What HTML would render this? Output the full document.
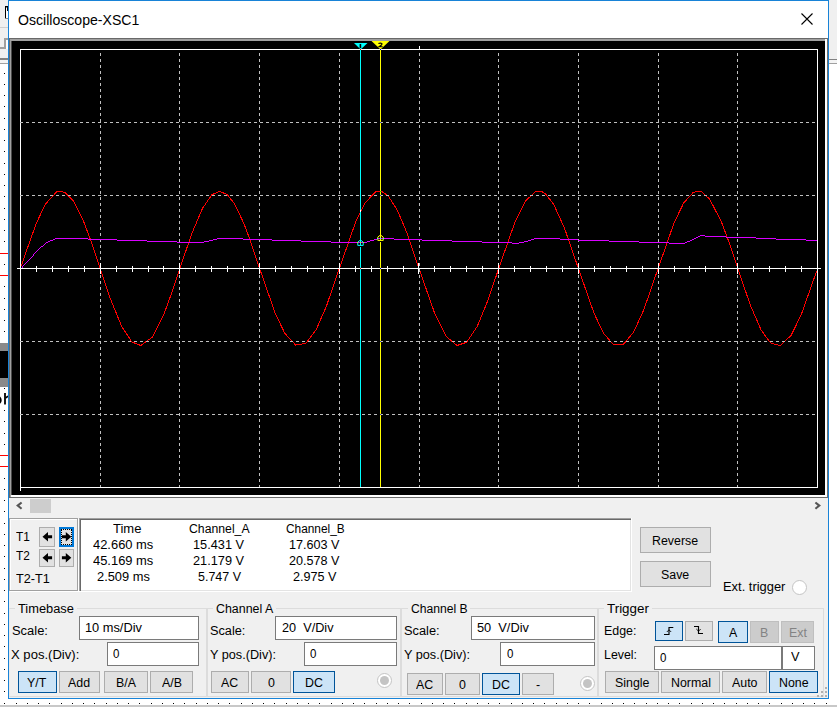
<!DOCTYPE html>
<html><head><meta charset="utf-8"><title>Oscilloscope-XSC1</title>
<style>
html,body{margin:0;padding:0;}
body{width:837px;height:707px;position:relative;overflow:hidden;background:#fff;font-family:"Liberation Sans",sans-serif;}
.t{position:absolute;white-space:pre;transform-origin:0 0;}
.b{position:absolute;box-sizing:border-box;background:#e1e1e1;border:1px solid #adadad;}
.ba{position:absolute;box-sizing:border-box;background:#cce4f7;border:1px solid #005499;}
.bd{position:absolute;box-sizing:border-box;background:#cccccc;border:1px solid #bfbfbf;}
.in{position:absolute;box-sizing:border-box;background:#fff;border:1px solid #7a7a7a;}
.g{position:absolute;box-sizing:border-box;border:1px solid #dcdcdc;}
</style></head><body>
<div style="position:absolute;left:0px;top:0px;width:8px;height:59px;background:#f0f0f0;"></div>
<div style="position:absolute;left:0px;top:27px;width:8px;height:1px;background:#cfcfcf;"></div>
<div style="position:absolute;left:5px;top:6px;width:3px;height:13px;background:#fff;"></div>
<div style="position:absolute;left:5px;top:6px;width:3px;height:1px;background:#000;"></div>
<div style="position:absolute;left:5px;top:7px;width:3px;height:0.5px;background:#888;"></div>
<div style="position:absolute;left:5px;top:6px;width:1px;height:13px;background:#000;"></div>
<div style="position:absolute;left:5px;top:18px;width:3px;height:1px;background:#000;"></div>
<div style="position:absolute;left:5px;top:17.5px;width:3px;height:0.5px;background:#888;"></div>
<div style="position:absolute;left:7px;top:7px;width:1px;height:4px;background:#111;"></div>
<div style="position:absolute;left:4px;top:38px;width:4px;height:2px;background:#a0a0a0;"></div>
<div style="position:absolute;left:4px;top:38px;width:2px;height:11px;background:#a0a0a0;"></div>
<div style="position:absolute;left:0px;top:47px;width:6px;height:2px;background:#a0a0a0;"></div>
<div style="position:absolute;left:6px;top:40px;width:2px;height:9px;background:#fff;"></div>
<div style="position:absolute;left:0px;top:58px;width:8px;height:2px;background:#828282;"></div>
<div style="position:absolute;left:0px;top:60px;width:8px;height:3px;background:#f4f4f4;"></div>
<div style="position:absolute;left:0px;top:63px;width:8px;height:1px;background:#a0a0a0;"></div>
<div style="position:absolute;left:829px;top:0px;width:8px;height:59px;background:#f0f0f0;"></div>
<div style="position:absolute;left:829px;top:59px;width:8px;height:1px;background:#828282;"></div>
<div style="position:absolute;left:829px;top:60px;width:8px;height:3px;background:#f4f4f4;"></div>
<div style="position:absolute;left:829px;top:63px;width:8px;height:1px;background:#a0a0a0;"></div>
<div style="position:absolute;left:0px;top:705px;width:837px;height:2px;background:#c8c8c8;"></div>
<div style="position:absolute;left:0px;top:343px;width:8px;height:8px;background:#8a8a8a;"></div>
<div style="position:absolute;left:0px;top:351px;width:8px;height:27px;background:#000;"></div>
<div style="position:absolute;left:0px;top:378px;width:8px;height:9px;background:#8a8a8a;"></div>
<div style="position:absolute;left:0px;top:253px;width:8px;height:1px;background:#ff0000;"></div>
<div style="position:absolute;left:0px;top:275px;width:8px;height:1px;background:#ff0000;"></div>
<div style="position:absolute;left:0px;top:455px;width:8px;height:1px;background:#ff0000;"></div>
<div style="position:absolute;left:0px;top:466px;width:8px;height:1px;background:#ff0000;"></div>
<svg style="position:absolute;left:0;top:388px" width="8" height="20"><rect x="4.1" y="5" width="1.8" height="11.5" fill="#000"/><path d="M5.9 10.2 Q6.8 8.6 8.2 8.4" stroke="#000" stroke-width="1.6" fill="none"/><ellipse cx="-2.6" cy="12.2" rx="3.4" ry="3.6" stroke="#000" stroke-width="1.8" fill="none"/></svg>
<svg style="position:absolute;left:0;top:0" width="837" height="707" shape-rendering="crispEdges"><rect x="4" y="73" width="1" height="1" fill="#000"/><rect x="4" y="84" width="1" height="1" fill="#000"/><rect x="4" y="95" width="1" height="1" fill="#000"/><rect x="4" y="106" width="1" height="1" fill="#000"/><rect x="4" y="118" width="1" height="1" fill="#000"/><rect x="4" y="129" width="1" height="1" fill="#000"/><rect x="4" y="140" width="1" height="1" fill="#000"/><rect x="4" y="151" width="1" height="1" fill="#000"/><rect x="4" y="163" width="1" height="1" fill="#000"/><rect x="4" y="174" width="1" height="1" fill="#000"/><rect x="4" y="185" width="1" height="1" fill="#000"/><rect x="4" y="196" width="1" height="1" fill="#000"/><rect x="4" y="208" width="1" height="1" fill="#000"/><rect x="4" y="219" width="1" height="1" fill="#000"/><rect x="4" y="230" width="1" height="1" fill="#000"/><rect x="4" y="241" width="1" height="1" fill="#000"/><rect x="4" y="264" width="1" height="1" fill="#000"/><rect x="4" y="286" width="1" height="1" fill="#000"/><rect x="4" y="298" width="1" height="1" fill="#000"/><rect x="4" y="309" width="1" height="1" fill="#000"/><rect x="4" y="320" width="1" height="1" fill="#000"/><rect x="4" y="331" width="1" height="1" fill="#000"/><rect x="4" y="388" width="1" height="1" fill="#000"/><rect x="4" y="410" width="1" height="1" fill="#000"/><rect x="4" y="421" width="1" height="1" fill="#000"/><rect x="4" y="433" width="1" height="1" fill="#000"/><rect x="4" y="444" width="1" height="1" fill="#000"/><rect x="4" y="478" width="1" height="1" fill="#000"/><rect x="4" y="489" width="1" height="1" fill="#000"/><rect x="4" y="500" width="1" height="1" fill="#000"/><rect x="4" y="511" width="1" height="1" fill="#000"/><rect x="4" y="523" width="1" height="1" fill="#000"/><rect x="4" y="534" width="1" height="1" fill="#000"/><rect x="4" y="545" width="1" height="1" fill="#000"/><rect x="4" y="556" width="1" height="1" fill="#000"/><rect x="4" y="568" width="1" height="1" fill="#000"/><rect x="4" y="579" width="1" height="1" fill="#000"/><rect x="4" y="590" width="1" height="1" fill="#000"/><rect x="4" y="601" width="1" height="1" fill="#000"/><rect x="4" y="613" width="1" height="1" fill="#000"/><rect x="4" y="624" width="1" height="1" fill="#000"/><rect x="4" y="635" width="1" height="1" fill="#000"/><rect x="4" y="646" width="1" height="1" fill="#000"/><rect x="4" y="658" width="1" height="1" fill="#000"/><rect x="4" y="669" width="1" height="1" fill="#000"/><rect x="4" y="680" width="1" height="1" fill="#000"/><rect x="4" y="691" width="1" height="1" fill="#000"/><rect x="4" y="703" width="1" height="1" fill="#000"/><rect x="16" y="703" width="1" height="1" fill="#000"/><rect x="27" y="703" width="1" height="1" fill="#000"/><rect x="38" y="703" width="1" height="1" fill="#000"/><rect x="49" y="703" width="1" height="1" fill="#000"/><rect x="61" y="703" width="1" height="1" fill="#000"/><rect x="72" y="703" width="1" height="1" fill="#000"/><rect x="83" y="703" width="1" height="1" fill="#000"/><rect x="94" y="703" width="1" height="1" fill="#000"/><rect x="106" y="703" width="1" height="1" fill="#000"/><rect x="117" y="703" width="1" height="1" fill="#000"/><rect x="128" y="703" width="1" height="1" fill="#000"/><rect x="139" y="703" width="1" height="1" fill="#000"/><rect x="151" y="703" width="1" height="1" fill="#000"/><rect x="162" y="703" width="1" height="1" fill="#000"/><rect x="173" y="703" width="1" height="1" fill="#000"/><rect x="184" y="703" width="1" height="1" fill="#000"/><rect x="196" y="703" width="1" height="1" fill="#000"/><rect x="207" y="703" width="1" height="1" fill="#000"/><rect x="218" y="703" width="1" height="1" fill="#000"/><rect x="229" y="703" width="1" height="1" fill="#000"/><rect x="241" y="703" width="1" height="1" fill="#000"/><rect x="252" y="703" width="1" height="1" fill="#000"/><rect x="263" y="703" width="1" height="1" fill="#000"/><rect x="274" y="703" width="1" height="1" fill="#000"/><rect x="286" y="703" width="1" height="1" fill="#000"/><rect x="297" y="703" width="1" height="1" fill="#000"/><rect x="308" y="703" width="1" height="1" fill="#000"/><rect x="319" y="703" width="1" height="1" fill="#000"/><rect x="331" y="703" width="1" height="1" fill="#000"/><rect x="342" y="703" width="1" height="1" fill="#000"/><rect x="353" y="703" width="1" height="1" fill="#000"/><rect x="364" y="703" width="1" height="1" fill="#000"/><rect x="376" y="703" width="1" height="1" fill="#000"/><rect x="387" y="703" width="1" height="1" fill="#000"/><rect x="398" y="703" width="1" height="1" fill="#000"/><rect x="409" y="703" width="1" height="1" fill="#000"/><rect x="421" y="703" width="1" height="1" fill="#000"/><rect x="432" y="703" width="1" height="1" fill="#000"/><rect x="443" y="703" width="1" height="1" fill="#000"/><rect x="454" y="703" width="1" height="1" fill="#000"/><rect x="466" y="703" width="1" height="1" fill="#000"/><rect x="477" y="703" width="1" height="1" fill="#000"/><rect x="488" y="703" width="1" height="1" fill="#000"/><rect x="499" y="703" width="1" height="1" fill="#000"/><rect x="511" y="703" width="1" height="1" fill="#000"/><rect x="522" y="703" width="1" height="1" fill="#000"/><rect x="533" y="703" width="1" height="1" fill="#000"/><rect x="544" y="703" width="1" height="1" fill="#000"/><rect x="556" y="703" width="1" height="1" fill="#000"/><rect x="567" y="703" width="1" height="1" fill="#000"/><rect x="578" y="703" width="1" height="1" fill="#000"/><rect x="589" y="703" width="1" height="1" fill="#000"/><rect x="601" y="703" width="1" height="1" fill="#000"/><rect x="612" y="703" width="1" height="1" fill="#000"/><rect x="623" y="703" width="1" height="1" fill="#000"/><rect x="634" y="703" width="1" height="1" fill="#000"/><rect x="646" y="703" width="1" height="1" fill="#000"/><rect x="657" y="703" width="1" height="1" fill="#000"/><rect x="668" y="703" width="1" height="1" fill="#000"/><rect x="679" y="703" width="1" height="1" fill="#000"/><rect x="691" y="703" width="1" height="1" fill="#000"/><rect x="702" y="703" width="1" height="1" fill="#000"/><rect x="713" y="703" width="1" height="1" fill="#000"/><rect x="724" y="703" width="1" height="1" fill="#000"/><rect x="736" y="703" width="1" height="1" fill="#000"/><rect x="747" y="703" width="1" height="1" fill="#000"/><rect x="758" y="703" width="1" height="1" fill="#000"/><rect x="769" y="703" width="1" height="1" fill="#000"/><rect x="781" y="703" width="1" height="1" fill="#000"/><rect x="792" y="703" width="1" height="1" fill="#000"/><rect x="803" y="703" width="1" height="1" fill="#000"/><rect x="814" y="703" width="1" height="1" fill="#000"/><rect x="826" y="703" width="1" height="1" fill="#000"/></svg>
<div style="position:absolute;left:8px;top:0px;width:821px;height:699px;background:#1883d7;"></div>
<div style="position:absolute;left:9px;top:1px;width:819px;height:697px;background:#f0f0f0;"></div>
<div style="position:absolute;left:9px;top:1px;width:819px;height:37px;background:#fff;"></div>
<div class="t" style="left:18.30px;top:11px;font-size:15px;line-height:17px;color:#000;transform:scaleX(0.9388);">Oscilloscope-XSC1</div>
<svg style="position:absolute;left:795px;top:8px" width="24" height="24"><path d="M6.5 5.5 L17.5 16.5 M17.5 5.5 L6.5 16.5" stroke="#000" stroke-width="1.1" fill="none"/></svg>
<div style="position:absolute;left:9px;top:38px;width:819px;height:460px;background:#fff;"></div>
<div style="position:absolute;left:9px;top:38px;width:818px;height:459px;background:#a0a0a0;"></div>
<div style="position:absolute;left:9px;top:38px;width:818px;height:1px;background:#696969;"></div>
<div style="position:absolute;left:9px;top:38px;width:1px;height:459px;background:#696969;"></div>
<div style="position:absolute;left:11px;top:41px;width:814px;height:454px;background:#000;"></div>
<div style="position:absolute;left:9px;top:497px;width:819px;height:1px;background:#696969;"></div>
<div style="position:absolute;left:11px;top:41px;width:1px;height:454px;background:#4a4a4a;"></div>
<div style="position:absolute;left:825px;top:39px;width:2px;height:458px;background:#fff;"></div>
<div style="position:absolute;left:11px;top:495px;width:816px;height:2px;background:#fff;"></div>
<div style="position:absolute;left:827px;top:38px;width:1px;height:460px;background:#707070;"></div>
<svg style="position:absolute;left:0;top:0" width="837" height="707" shape-rendering="crispEdges"><polyline points="21.2,266.4 24.5,256.3 36.5,222.8 45.5,204.0 56.5,192.0 60.7,191.5 65.2,192.5 73.5,201.2 83.6,221.4 91.3,241.9 100.2,268.5 110.3,298.5 121.7,326.5 131.9,342.0 140.8,345.5 152.3,337.1 163.7,314.7 172.0,292.2 179.9,268.5 191.5,234.3 202.4,208.5 211.9,194.7 219.6,191.5 227.2,194.4 234.8,204.3 243.7,223.1 248.8,236.5 259.6,268.5 275.4,313.7 284.9,333.5 295.7,345.1 305.9,343.4 316.1,329.8 326.3,306.5 339.3,268.5 356.0,221.1 364.9,203.0 375.7,191.8 382.1,191.6 388.5,196.3 397.4,210.3 406.3,231.3 419.0,268.5 434.7,313.4 446.2,336.5 457.0,345.5 466.6,342.3 477.4,326.1 488.0,300.2 498.7,268.5 514.7,222.8 525.5,201.1 535.1,191.8 542.1,191.8 545.9,194.3 553.6,204.3 564.4,227.9 578.4,268.5 594.1,313.4 603.6,333.4 613.2,344.4 623.4,344.3 633.6,332.2 643.7,310.1 658.1,268.5 674.1,222.8 683.6,203.1 693.2,192.4 697.6,191.5 701.5,191.8 709.7,199.2 721.2,221.4 728.8,241.6 737.8,268.5 750.3,305.1 761.1,330.0 770.6,343.0 780.2,345.5 791.0,335.5 801.2,314.9 816.6,271.2" stroke="#ff0000" stroke-width="1" fill="none"/><path d="M20.5 49 V491 M817.5 49 V488 M20 49.5 H818 M20 487.5 H818 M17 268.5 H821 M419.5 46 V49" stroke="#fff" stroke-width="1" fill="none"/><path d="M100.5 53 V487 M179.5 53 V487 M259.5 53 V487 M339.5 53 V487 M419.5 53 V487 M498.5 53 V487 M578.5 53 V487 M658.5 53 V487 M737.5 53 V487 " stroke="#c0c0c0" stroke-width="1" stroke-dasharray="3 3" fill="none"/><path d="M20 122.5 H817 M20 195.5 H817 M20 341.5 H817 M20 414.5 H817 " stroke="#c0c0c0" stroke-width="1" stroke-dasharray="3 3" fill="none"/><path d="M36.5 266 V272 M52.5 266 V272 M68.5 266 V272 M84.5 266 V272 M100.5 263 V274 M116.5 266 V272 M132.5 266 V272 M148.5 266 V272 M163.5 266 V272 M179.5 263 V274 M195.5 266 V272 M211.5 266 V272 M227.5 266 V272 M243.5 266 V272 M259.5 263 V274 M275.5 266 V272 M291.5 266 V272 M307.5 266 V272 M323.5 266 V272 M339.5 263 V274 M355.5 266 V272 M371.5 266 V272 M387.5 266 V272 M403.5 266 V272 M418.5 263 V274 M434.5 266 V272 M450.5 266 V272 M466.5 266 V272 M482.5 266 V272 M498.5 263 V274 M514.5 266 V272 M530.5 266 V272 M546.5 266 V272 M562.5 266 V272 M578.5 263 V274 M594.5 266 V272 M610.5 266 V272 M626.5 266 V272 M642.5 266 V272 M658.5 263 V274 M674.5 266 V272 M689.5 266 V272 M705.5 266 V272 M721.5 266 V272 M737.5 263 V274 M753.5 266 V272 M769.5 266 V272 M785.5 266 V272 M801.5 266 V272 " stroke="#fff" stroke-width="1" fill="none"/><rect x="22" y="267" width="1" height="1" fill="#d800ff"/><rect x="22" y="266" width="1" height="1" fill="#d800ff"/><rect x="23" y="265" width="1" height="1" fill="#d800ff"/><rect x="24" y="264" width="1" height="1" fill="#d800ff"/><rect x="25" y="263" width="1" height="1" fill="#d800ff"/><rect x="26" y="262" width="1" height="1" fill="#d800ff"/><rect x="27" y="261" width="1" height="1" fill="#d800ff"/><rect x="28" y="260" width="1" height="1" fill="#d800ff"/><rect x="29" y="259" width="1" height="1" fill="#d800ff"/><rect x="30" y="258" width="1" height="1" fill="#d800ff"/><rect x="31" y="257" width="1" height="1" fill="#d800ff"/><rect x="32" y="256" width="1" height="1" fill="#d800ff"/><rect x="33" y="255" width="1" height="1" fill="#d800ff"/><rect x="33" y="254" width="1" height="1" fill="#d800ff"/><rect x="34" y="253" width="1" height="1" fill="#d800ff"/><rect x="35" y="252" width="1" height="1" fill="#d800ff"/><rect x="36" y="251" width="1" height="1" fill="#d800ff"/><rect x="37" y="250" width="1" height="1" fill="#d800ff"/><rect x="38" y="249" width="1" height="1" fill="#d800ff"/><rect x="39" y="248" width="1" height="1" fill="#d800ff"/><rect x="40" y="247" width="1" height="1" fill="#d800ff"/><rect x="41" y="246" width="1" height="1" fill="#d800ff"/><rect x="42" y="246" width="1" height="1" fill="#d800ff"/><rect x="43" y="245" width="1" height="1" fill="#d800ff"/><rect x="44" y="244" width="1" height="1" fill="#d800ff"/><rect x="45" y="243" width="1" height="1" fill="#d800ff"/><rect x="46" y="242" width="1" height="1" fill="#d800ff"/><rect x="47" y="242" width="1" height="1" fill="#d800ff"/><rect x="48" y="241" width="1" height="1" fill="#d800ff"/><rect x="49" y="241" width="1" height="1" fill="#d800ff"/><rect x="50" y="240" width="1" height="1" fill="#d800ff"/><rect x="51" y="240" width="1" height="1" fill="#d800ff"/><rect x="52" y="240" width="1" height="1" fill="#d800ff"/><rect x="53" y="239" width="1" height="1" fill="#d800ff"/><rect x="54" y="239" width="1" height="1" fill="#d800ff"/><rect x="55" y="238" width="33" height="1" fill="#d800ff"/><rect x="88" y="239" width="29" height="1" fill="#d800ff"/><rect x="117" y="240" width="30" height="1" fill="#d800ff"/><rect x="147" y="241" width="30" height="1" fill="#d800ff"/><rect x="177" y="242" width="27" height="1" fill="#d800ff"/><rect x="204" y="241" width="5" height="1" fill="#d800ff"/><rect x="209" y="240" width="4" height="1" fill="#d800ff"/><rect x="213" y="239" width="4" height="1" fill="#d800ff"/><rect x="217" y="238" width="26" height="1" fill="#d800ff"/><rect x="243" y="239" width="29" height="1" fill="#d800ff"/><rect x="272" y="240" width="29" height="1" fill="#d800ff"/><rect x="301" y="241" width="30" height="1" fill="#d800ff"/><rect x="331" y="242" width="36" height="1" fill="#d800ff"/><rect x="367" y="241" width="3" height="1" fill="#d800ff"/><rect x="370" y="240" width="4" height="1" fill="#d800ff"/><rect x="374" y="239" width="3" height="1" fill="#d800ff"/><rect x="377" y="238" width="17" height="1" fill="#d800ff"/><rect x="394" y="239" width="28" height="1" fill="#d800ff"/><rect x="422" y="240" width="30" height="1" fill="#d800ff"/><rect x="452" y="241" width="30" height="1" fill="#d800ff"/><rect x="482" y="242" width="30" height="1" fill="#d800ff"/><rect x="512" y="243" width="7" height="1" fill="#d800ff"/><rect x="519" y="242" width="5" height="1" fill="#d800ff"/><rect x="524" y="241" width="4" height="1" fill="#d800ff"/><rect x="528" y="240" width="3" height="1" fill="#d800ff"/><rect x="531" y="239" width="3" height="1" fill="#d800ff"/><rect x="534" y="238" width="26" height="1" fill="#d800ff"/><rect x="560" y="239" width="18" height="1" fill="#d800ff"/><rect x="578" y="240" width="31" height="1" fill="#d800ff"/><rect x="609" y="241" width="30" height="1" fill="#d800ff"/><rect x="639" y="242" width="30" height="1" fill="#d800ff"/><rect x="669" y="243" width="16" height="1" fill="#d800ff"/><rect x="685" y="242" width="2" height="1" fill="#d800ff"/><rect x="687" y="241" width="3" height="1" fill="#d800ff"/><rect x="690" y="240" width="2" height="1" fill="#d800ff"/><rect x="692" y="239" width="2" height="1" fill="#d800ff"/><rect x="694" y="238" width="2" height="1" fill="#d800ff"/><rect x="696" y="237" width="2" height="1" fill="#d800ff"/><rect x="698" y="236" width="2" height="1" fill="#d800ff"/><rect x="700" y="235" width="5" height="1" fill="#d800ff"/><rect x="705" y="236" width="21" height="1" fill="#d800ff"/><rect x="726" y="237" width="30" height="1" fill="#d800ff"/><rect x="756" y="238" width="20" height="1" fill="#d800ff"/><rect x="776" y="239" width="30" height="1" fill="#d800ff"/><rect x="806" y="240" width="11" height="1" fill="#d800ff"/><path d="M360.5 49 V246 M360.5 247 V487" stroke="#00ffff" stroke-width="1" fill="none"/><path d="M380.5 49 V241 M380.5 242 V487" stroke="#ffff00" stroke-width="1" fill="none"/></svg>
<svg style="position:absolute;left:0;top:0" width="837" height="707"><polygon points="354,43 367.5,43 360.7,49.5" fill="#00ffff"/><polygon points="371.5,41 389.5,41 380.5,49.5" fill="#ffff00"/><rect x="359.6" y="44" width="1.6" height="4" fill="#000"/><path d="M378.4 43.6 Q380.5 42.6 382 43.6 Q382.4 44.6 379 46.7 H382.7" stroke="#000" stroke-width="1.1" fill="none"/><path d="M360.5 240 L363.2 242 L363.2 245.4 H357.8 V242 Z" stroke="#00ffff" stroke-width="1" fill="none" stroke-linejoin="round"/><path d="M380.5 235 L383.2 237 V240.4 H377.8 V237 Z" stroke="#ffff00" stroke-width="1" fill="none" stroke-linejoin="round"/><rect x="360" y="49" width="1" height="1" fill="#f00"/><rect x="380" y="122" width="1" height="1" fill="#3f3fc0"/><rect x="380" y="195" width="1" height="1" fill="#3f3fc0"/><rect x="380" y="341" width="1" height="1" fill="#3f3fc0"/><rect x="380" y="414" width="1" height="1" fill="#3f3fc0"/><rect x="360" y="210" width="1" height="2" fill="#fff"/><rect x="380" y="191" width="1" height="1" fill="#00ff00"/><rect x="360" y="242" width="1" height="1" fill="#d8ff00"/><rect x="357" y="242" width="1" height="1" fill="#d8ff00"/><rect x="363" y="242" width="1" height="1" fill="#d8ff00"/><rect x="380" y="238" width="1" height="1" fill="#27ffff"/><rect x="377" y="238" width="1" height="1" fill="#27ffff"/><rect x="383" y="238" width="1" height="1" fill="#27ffff"/><rect x="380" y="49" width="1" height="1" fill="#00f"/><rect x="360" y="268" width="1" height="1" fill="#f00"/><rect x="380" y="268" width="1" height="1" fill="#00f"/></svg>
<div style="position:absolute;left:30px;top:499px;width:21px;height:14px;background:#cdcdcd;"></div>
<svg style="position:absolute;left:14px;top:499px" width="12" height="14"><path d="M7.6 3.5 L3.7 6.6 L7.6 9.7" stroke="#555" stroke-width="2.1" fill="none"/></svg>
<svg style="position:absolute;left:811px;top:499px" width="12" height="14"><path d="M4.4 3.5 L8.3 6.6 L4.4 9.7" stroke="#555" stroke-width="2.1" fill="none"/></svg>
<div style="position:absolute;box-sizing:border-box;left:10px;top:519px;width:69px;height:73px;border:1px solid #fff"></div>
<div style="position:absolute;box-sizing:border-box;left:9px;top:518px;width:69px;height:73px;border:1px solid #a0a0a0"></div>
<div class="t" style="left:16.20px;top:530px;font-size:12.5px;line-height:14px;color:#000;transform:scaleX(0.9460);">T1</div>
<div class="t" style="left:16.20px;top:549px;font-size:12.5px;line-height:14px;color:#000;transform:scaleX(0.9460);">T2</div>
<div class="t" style="left:16.20px;top:572px;font-size:12.5px;line-height:14px;color:#000;transform:scaleX(1.0139);">T2-T1</div>
<div class="b" style="left:39px;top:527px;width:16px;height:20px"></div>
<svg style="position:absolute;left:0;top:0" width="837" height="707"><path d="M42.5 536.7 L48.0 531.9000000000001 V535.2 H52.1 V538.2 H48.0 V541.5 Z" fill="#000"/></svg>
<div style="position:absolute;box-sizing:border-box;left:59px;top:527px;width:15px;height:20px;background:#e1e1e1;border:2px solid #0078d7"></div>
<div style="position:absolute;box-sizing:border-box;left:61px;top:529px;width:11px;height:16px;border:1px dotted #000"></div>
<svg style="position:absolute;left:0;top:0" width="837" height="707"><path d="M71.3 536.7 L65.8 531.9000000000001 V535.2 H61.9 V538.2 H65.8 V541.5 Z" fill="#000"/></svg>
<div class="b" style="left:39px;top:549px;width:16px;height:18px"></div>
<svg style="position:absolute;left:0;top:0" width="837" height="707"><path d="M42.5 557.7 L48.0 552.9000000000001 V556.2 H52.1 V559.2 H48.0 V562.5 Z" fill="#000"/></svg>
<div class="b" style="left:59px;top:549px;width:15px;height:18px"></div>
<svg style="position:absolute;left:0;top:0" width="837" height="707"><path d="M71.3 557.7 L65.8 552.9000000000001 V556.2 H61.9 V559.2 H65.8 V562.5 Z" fill="#000"/></svg>
<div style="position:absolute;left:79px;top:518px;width:553px;height:74px;background:#fff;"></div>
<div style="position:absolute;left:79px;top:518px;width:552px;height:73px;background:#a0a0a0;"></div>
<div style="position:absolute;left:80px;top:519px;width:551px;height:72px;background:#696969;"></div>
<div style="position:absolute;left:81px;top:520px;width:550px;height:71px;background:#fff;"></div>
<div style="position:absolute;left:630px;top:520px;width:1px;height:71px;background:#e3e3e3;"></div>
<div style="position:absolute;left:81px;top:590px;width:550px;height:1px;background:#e3e3e3;"></div>
<div class="t" style="left:113.40px;top:522px;font-size:12.5px;line-height:14px;color:#000;transform:scaleX(1.0398);">Time</div>
<div class="t" style="left:92.90px;top:538px;font-size:12.5px;line-height:14px;color:#000;transform:scaleX(1.0332);">42.660 ms</div>
<div class="t" style="left:92.90px;top:554px;font-size:12.5px;line-height:14px;color:#000;transform:scaleX(1.0332);">45.169 ms</div>
<div class="t" style="left:97.20px;top:570px;font-size:12.5px;line-height:14px;color:#000;transform:scaleX(1.0270);">2.509 ms</div>
<div class="t" style="left:189.40px;top:522px;font-size:12.5px;line-height:14px;color:#000;transform:scaleX(0.9798);">Channel_A</div>
<div class="t" style="left:193.20px;top:538px;font-size:12.5px;line-height:14px;color:#000;transform:scaleX(1.0192);">15.431 V</div>
<div class="t" style="left:193.20px;top:554px;font-size:12.5px;line-height:14px;color:#000;transform:scaleX(1.0192);">21.179 V</div>
<div class="t" style="left:197.50px;top:570px;font-size:12.5px;line-height:14px;color:#000;transform:scaleX(0.9980);">5.747 V</div>
<div class="t" style="left:285.50px;top:522px;font-size:12.5px;line-height:14px;color:#000;transform:scaleX(0.9491);">Channel_B</div>
<div class="t" style="left:289.40px;top:538px;font-size:12.5px;line-height:14px;color:#000;transform:scaleX(1.0092);">17.603 V</div>
<div class="t" style="left:289.40px;top:554px;font-size:12.5px;line-height:14px;color:#000;transform:scaleX(1.0092);">20.578 V</div>
<div class="t" style="left:293.20px;top:570px;font-size:12.5px;line-height:14px;color:#000;transform:scaleX(1.0096);">2.975 V</div>
<div class="b" style="left:640px;top:527px;width:71px;height:26px"></div>
<div class="t" style="left:652.46px;top:534px;font-size:12.5px;line-height:14px;color:#000;transform:scaleX(0.9900);">Reverse</div>
<div class="b" style="left:640px;top:561px;width:71px;height:26px"></div>
<div class="t" style="left:661.40px;top:568px;font-size:12.5px;line-height:14px;color:#000;transform:scaleX(0.9900);">Save</div>
<div class="t" style="left:723.40px;top:580px;font-size:12.5px;line-height:14px;color:#000;transform:scaleX(1.0325);">Ext. trigger</div>
<div style="position:absolute;box-sizing:border-box;left:791.5px;top:580px;width:15px;height:15px;border-radius:50%;background:#fff;border:1px solid #c4c4c4"></div>
<div class="g" style="left:9px;top:608px;width:199px;height:89px;border-left-color:#eaeaea;"></div>
<div style="position:absolute;left:14.8px;top:608px;width:61.900000000000006px;height:1px;background:#f0f0f0;"></div>
<div class="t" style="left:17.80px;top:602px;font-size:12.5px;line-height:14px;color:#000;transform:scaleX(1.0271);">Timebase</div>
<div class="g" style="left:206px;top:608px;width:195px;height:89px;"></div>
<div style="position:absolute;left:212.6px;top:608px;width:63.20000000000002px;height:1px;background:#f0f0f0;"></div>
<div class="t" style="left:215.60px;top:602px;font-size:12.5px;line-height:14px;color:#000;transform:scaleX(0.9915);">Channel A</div>
<div class="g" style="left:401px;top:608px;width:197px;height:89px;"></div>
<div style="position:absolute;left:407.6px;top:608px;width:62.69999999999999px;height:1px;background:#f0f0f0;"></div>
<div class="t" style="left:410.60px;top:602px;font-size:12.5px;line-height:14px;color:#000;transform:scaleX(0.9713);">Channel B</div>
<div class="g" style="left:598px;top:608px;width:226px;height:89px;"></div>
<div style="position:absolute;left:604.1px;top:608px;width:47.89999999999998px;height:1px;background:#f0f0f0;"></div>
<div class="t" style="left:607.10px;top:602px;font-size:12.5px;line-height:14px;color:#000;transform:scaleX(1.0709);">Trigger</div>
<div class="t" style="left:11.70px;top:624px;font-size:12.5px;line-height:14px;color:#000;transform:scaleX(1.0335);">Scale:</div>
<div class="in" style="left:79px;top:616px;width:120px;height:24px"></div>
<div class="t" style="left:85.30px;top:621px;font-size:12.5px;line-height:14px;color:#000;transform:scaleX(1.0241);">10 ms/Div</div>
<div class="t" style="left:11.20px;top:648px;font-size:12.5px;line-height:14px;color:#000;transform:scaleX(1.0461);">X pos.(Div):</div>
<div class="in" style="left:107px;top:642px;width:92px;height:24px"></div>
<div class="t" style="left:113.40px;top:647px;font-size:12.5px;line-height:14px;color:#000;transform:scaleX(0.9209);">0</div>
<div class="ba" style="left:18px;top:671px;width:39px;height:22px"></div>
<div class="t" style="left:26.77px;top:676px;font-size:12.5px;line-height:14px;color:#000;transform:scaleX(0.9900);">Y/T</div>
<div class="b" style="left:59px;top:671px;width:41px;height:22px"></div>
<div class="t" style="left:68.49px;top:676px;font-size:12.5px;line-height:14px;color:#000;transform:scaleX(0.9900);">Add</div>
<div class="b" style="left:104px;top:671px;width:44px;height:22px"></div>
<div class="t" style="left:116.03px;top:676px;font-size:12.5px;line-height:14px;color:#000;transform:scaleX(0.9900);">B/A</div>
<div class="b" style="left:150px;top:671px;width:43px;height:22px"></div>
<div class="t" style="left:161.53px;top:676px;font-size:12.5px;line-height:14px;color:#000;transform:scaleX(0.9900);">A/B</div>
<div class="t" style="left:209.80px;top:624px;font-size:12.5px;line-height:14px;color:#000;transform:scaleX(1.0191);">Scale:</div>
<div class="in" style="left:275px;top:616px;width:122px;height:24px"></div>
<div class="t" style="left:281.50px;top:621px;font-size:12.5px;line-height:14px;color:#000;transform:scaleX(1.0155);">20  V/Div</div>
<div class="t" style="left:210.00px;top:648px;font-size:12.5px;line-height:14px;color:#000;transform:scaleX(1.0144);">Y pos.(Div):</div>
<div class="in" style="left:304px;top:642px;width:93px;height:24px"></div>
<div class="t" style="left:310.40px;top:647px;font-size:12.5px;line-height:14px;color:#000;transform:scaleX(0.9209);">0</div>
<div class="b" style="left:211px;top:671px;width:38px;height:22px"></div>
<div class="t" style="left:221.40px;top:676px;font-size:12.5px;line-height:14px;color:#000;transform:scaleX(0.9900);">AC</div>
<div class="b" style="left:251px;top:671px;width:40px;height:22px"></div>
<div class="t" style="left:267.56px;top:676px;font-size:12.5px;line-height:14px;color:#000;transform:scaleX(0.9900);">0</div>
<div class="ba" style="left:293px;top:671px;width:42px;height:22px"></div>
<div class="t" style="left:305.06px;top:676px;font-size:12.5px;line-height:14px;color:#000;transform:scaleX(0.9900);">DC</div>
<div style="position:absolute;box-sizing:border-box;left:376.5px;top:673.0px;width:15px;height:15px;border-radius:50%;background:#fff;border:1px solid #c4c4c4"></div>
<div style="position:absolute;left:379.5px;top:676.0px;width:9px;height:9px;border-radius:50%;background:#c4c4c4"></div>
<div class="t" style="left:403.80px;top:624px;font-size:12.5px;line-height:14px;color:#000;transform:scaleX(1.0248);">Scale:</div>
<div class="in" style="left:471px;top:616px;width:124px;height:24px"></div>
<div class="t" style="left:477.30px;top:621px;font-size:12.5px;line-height:14px;color:#000;transform:scaleX(1.0234);">50  V/Div</div>
<div class="t" style="left:404.30px;top:648px;font-size:12.5px;line-height:14px;color:#000;transform:scaleX(1.0144);">Y pos.(Div):</div>
<div class="in" style="left:500px;top:642px;width:95px;height:24px"></div>
<div class="t" style="left:506.60px;top:647px;font-size:12.5px;line-height:14px;color:#000;transform:scaleX(0.9209);">0</div>
<div class="b" style="left:407px;top:673px;width:36px;height:22px"></div>
<div class="t" style="left:416.40px;top:678px;font-size:12.5px;line-height:14px;color:#000;transform:scaleX(0.9900);">AC</div>
<div class="b" style="left:445px;top:673px;width:35px;height:22px"></div>
<div class="t" style="left:459.06px;top:678px;font-size:12.5px;line-height:14px;color:#000;transform:scaleX(0.9900);">0</div>
<div class="ba" style="left:482px;top:673px;width:38px;height:22px"></div>
<div class="t" style="left:492.06px;top:678px;font-size:12.5px;line-height:14px;color:#000;transform:scaleX(0.9900);">DC</div>
<div class="b" style="left:522px;top:673px;width:32px;height:22px"></div>
<div class="t" style="left:535.94px;top:678px;font-size:12.5px;line-height:14px;color:#000;transform:scaleX(0.9900);">-</div>
<div style="position:absolute;box-sizing:border-box;left:579.5px;top:675.5px;width:15px;height:15px;border-radius:50%;background:#fff;border:1px solid #c4c4c4"></div>
<div style="position:absolute;left:582.5px;top:678.5px;width:9px;height:9px;border-radius:50%;background:#c4c4c4"></div>
<div class="t" style="left:604.20px;top:624px;font-size:12.5px;line-height:14px;color:#000;transform:scaleX(0.9920);">Edge:</div>
<div class="t" style="left:604.20px;top:648px;font-size:12.5px;line-height:14px;color:#000;transform:scaleX(0.9895);">Level:</div>
<div class="ba" style="left:655px;top:621px;width:28px;height:20px"></div>
<div class="b" style="left:685px;top:621px;width:28px;height:20px"></div>
<svg style="position:absolute;left:0;top:0" width="837" height="707"><path d="M664 634.5 H669 V627.5 H673.3 M694 626.5 H698.5 V633.5 H703" stroke="#000" stroke-width="1.15" fill="none"/><path d="M666.8 632 L669 629.8 L671.2 632 M696.3 629 L698.5 631.2 L700.7 629" stroke="#000" stroke-width="0.85" fill="none"/></svg>
<div class="ba" style="left:718px;top:621px;width:30px;height:22px"></div>
<div class="t" style="left:728.87px;top:626px;font-size:12.5px;line-height:14px;color:#000;transform:scaleX(0.9900);">A</div>
<div class="bd" style="left:750px;top:621px;width:29px;height:22px"></div>
<div class="t" style="left:760.37px;top:626px;font-size:12.5px;line-height:14px;color:#838383;transform:scaleX(0.9900);">B</div>
<div class="bd" style="left:781px;top:621px;width:33px;height:22px"></div>
<div class="t" style="left:788.56px;top:626px;font-size:12.5px;line-height:14px;color:#838383;transform:scaleX(0.9900);">Ext</div>
<div class="in" style="left:654px;top:646px;width:128px;height:24px"></div>
<div class="t" style="left:660.20px;top:651px;font-size:12.5px;line-height:14px;color:#000;transform:scaleX(0.9209);">0</div>
<div class="in" style="left:782px;top:646px;width:33px;height:24px"></div>
<div class="t" style="left:790.50px;top:650px;font-size:12.5px;line-height:14px;color:#000;transform:scaleX(1.0195);">V</div>
<div class="b" style="left:605px;top:671px;width:54px;height:22px"></div>
<div class="t" style="left:614.80px;top:676px;font-size:12.5px;line-height:14px;color:#000;transform:scaleX(0.9900);">Single</div>
<div class="b" style="left:661px;top:671px;width:59px;height:22px"></div>
<div class="t" style="left:670.56px;top:676px;font-size:12.5px;line-height:14px;color:#000;transform:scaleX(0.9900);">Normal</div>
<div class="b" style="left:722px;top:671px;width:45px;height:22px"></div>
<div class="t" style="left:731.77px;top:676px;font-size:12.5px;line-height:14px;color:#000;transform:scaleX(0.9900);">Auto</div>
<div class="ba" style="left:769px;top:671px;width:49px;height:22px"></div>
<div class="t" style="left:778.71px;top:676px;font-size:12.5px;line-height:14px;color:#000;transform:scaleX(0.9900);">None</div>
<div style="position:absolute;left:825.4px;top:687px;width:2.0px;height:2px;background:#b0b0b0;"></div>
<div style="position:absolute;left:821.4px;top:691px;width:2.0px;height:2px;background:#b0b0b0;"></div>
<div style="position:absolute;left:825.4px;top:691px;width:2.0px;height:2px;background:#b0b0b0;"></div>
<div style="position:absolute;left:817.4px;top:695px;width:2.0px;height:2px;background:#b0b0b0;"></div>
<div style="position:absolute;left:821.4px;top:695px;width:2.0px;height:2px;background:#b0b0b0;"></div>
<div style="position:absolute;left:825.4px;top:695px;width:2.0px;height:2px;background:#b0b0b0;"></div>
</body></html>
